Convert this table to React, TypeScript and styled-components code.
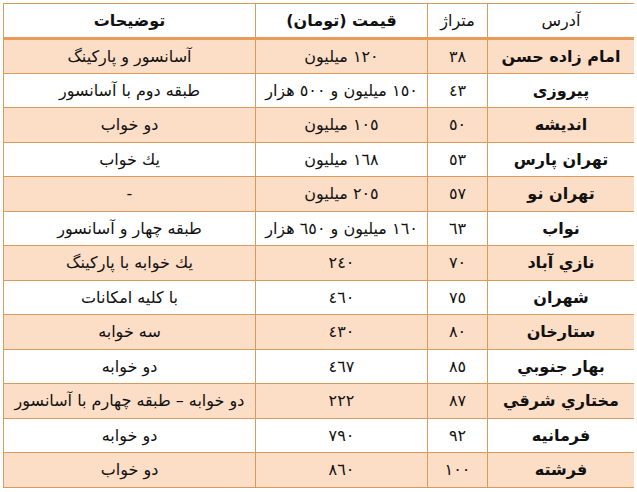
import React from 'react'
import styled, { createGlobalStyle } from 'styled-components'

type Row = {
  address: string
  area: string
  price: string
  note: string
}

const rows: Row[] = [
  { address: 'امام زاده حسن', area: '٣٨', price: '١٢٠ میلیون', note: 'آسانسور و پارکینگ' },
  { address: 'پیروزی', area: '٤٣', price: '١٥٠ میلیون و ٥٠٠ هزار', note: 'طبقه دوم با آسانسور' },
  { address: 'اندیشه', area: '٥٠', price: '١٠٥ میلیون', note: 'دو خواب' },
  { address: 'تهران پارس', area: '٥٣', price: '١٦٨ میلیون', note: 'يك خواب' },
  { address: 'تهران نو', area: '٥٧', price: '٢٠٥ میلیون', note: '-' },
  { address: 'نواب', area: '٦٣', price: '١٦٠ میلیون و ٦٥٠ هزار', note: 'طبقه چهار و آسانسور' },
  { address: 'نازي آباد', area: '٧٠', price: '٢٤٠', note: 'يك خوابه با پاركینگ' },
  { address: 'شهران', area: '٧٥', price: '٤٦٠', note: 'با كلیه امكانات' },
  { address: 'ستارخان', area: '٨٠', price: '٤٣٠', note: 'سه خوابه' },
  { address: 'بهار جنوبي', area: '٨٥', price: '٤٦٧', note: 'دو خوابه' },
  { address: 'مختاري شرقي', area: '٨٧', price: '٢٢٢', note: 'دو خوابه – طبقه چهارم با آسانسور' },
  { address: 'فرمانیه', area: '٩٢', price: '٧٩٠', note: 'دو خوابه' },
  { address: 'فرشته', area: '١٠٠', price: '٨٦٠', note: 'دو خواب' },
]

export default function App() {
  return (
    <>
      <GlobalStyle />
      <Table dir="rtl">
        <colgroup>
          <col style={{ width: 147 }} />
          <col style={{ width: 60 }} />
          <col style={{ width: 172 }} />
          <col style={{ width: 252 }} />
        </colgroup>
        <thead>
          <tr>
            <Th>آدرس</Th>
            <Th>متراژ</Th>
            <Th $bold>قیمت (تومان)</Th>
            <Th $bold>توضیحات</Th>
          </tr>
        </thead>
        <tbody>
          {rows.map((r, i) => (
            <Tr key={i} $shaded={i % 2 === 0}>
              <Td $bold>{r.address}</Td>
              <Td>{r.area}</Td>
              <Td>{r.price}</Td>
              <Td>{r.note}</Td>
            </Tr>
          ))}
        </tbody>
      </Table>
    </>
  )
}

const GlobalStyle = createGlobalStyle`
  body {
    margin: 3px;
    background: #ffffff;
    font-family: "DejaVu Sans", sans-serif;
  }
`

const Table = styled.table`
  width: 631px;
  border-collapse: collapse;
  table-layout: fixed;
  font-family: "DejaVu Sans", sans-serif;
  font-size: 16px;
  line-height: 1.2;
  color: #111;
  border: 1px solid #d99a5e;
`

const Th = styled.th<{ $bold?: boolean }>`
  height: 33px;
  padding: 0;
  text-align: center;
  font-weight: ${p => (p.$bold ? 700 : 400)};
  border: 1px solid #d99a5e;
  border-bottom: 3px solid #e89a58;
  background: #ffffff;
`

const Tr = styled.tr<{ $shaded?: boolean }>`
  height: 34.5px;
  background: ${p => (p.$shaded ? '#fcddc6' : '#ffffff')};
`

const Td = styled.td<{ $bold?: boolean }>`
  padding: 0 2px;
  text-align: center;
  white-space: nowrap;
  font-weight: ${p => (p.$bold ? 700 : 400)};
  border: 1px solid #d99a5e;
`
